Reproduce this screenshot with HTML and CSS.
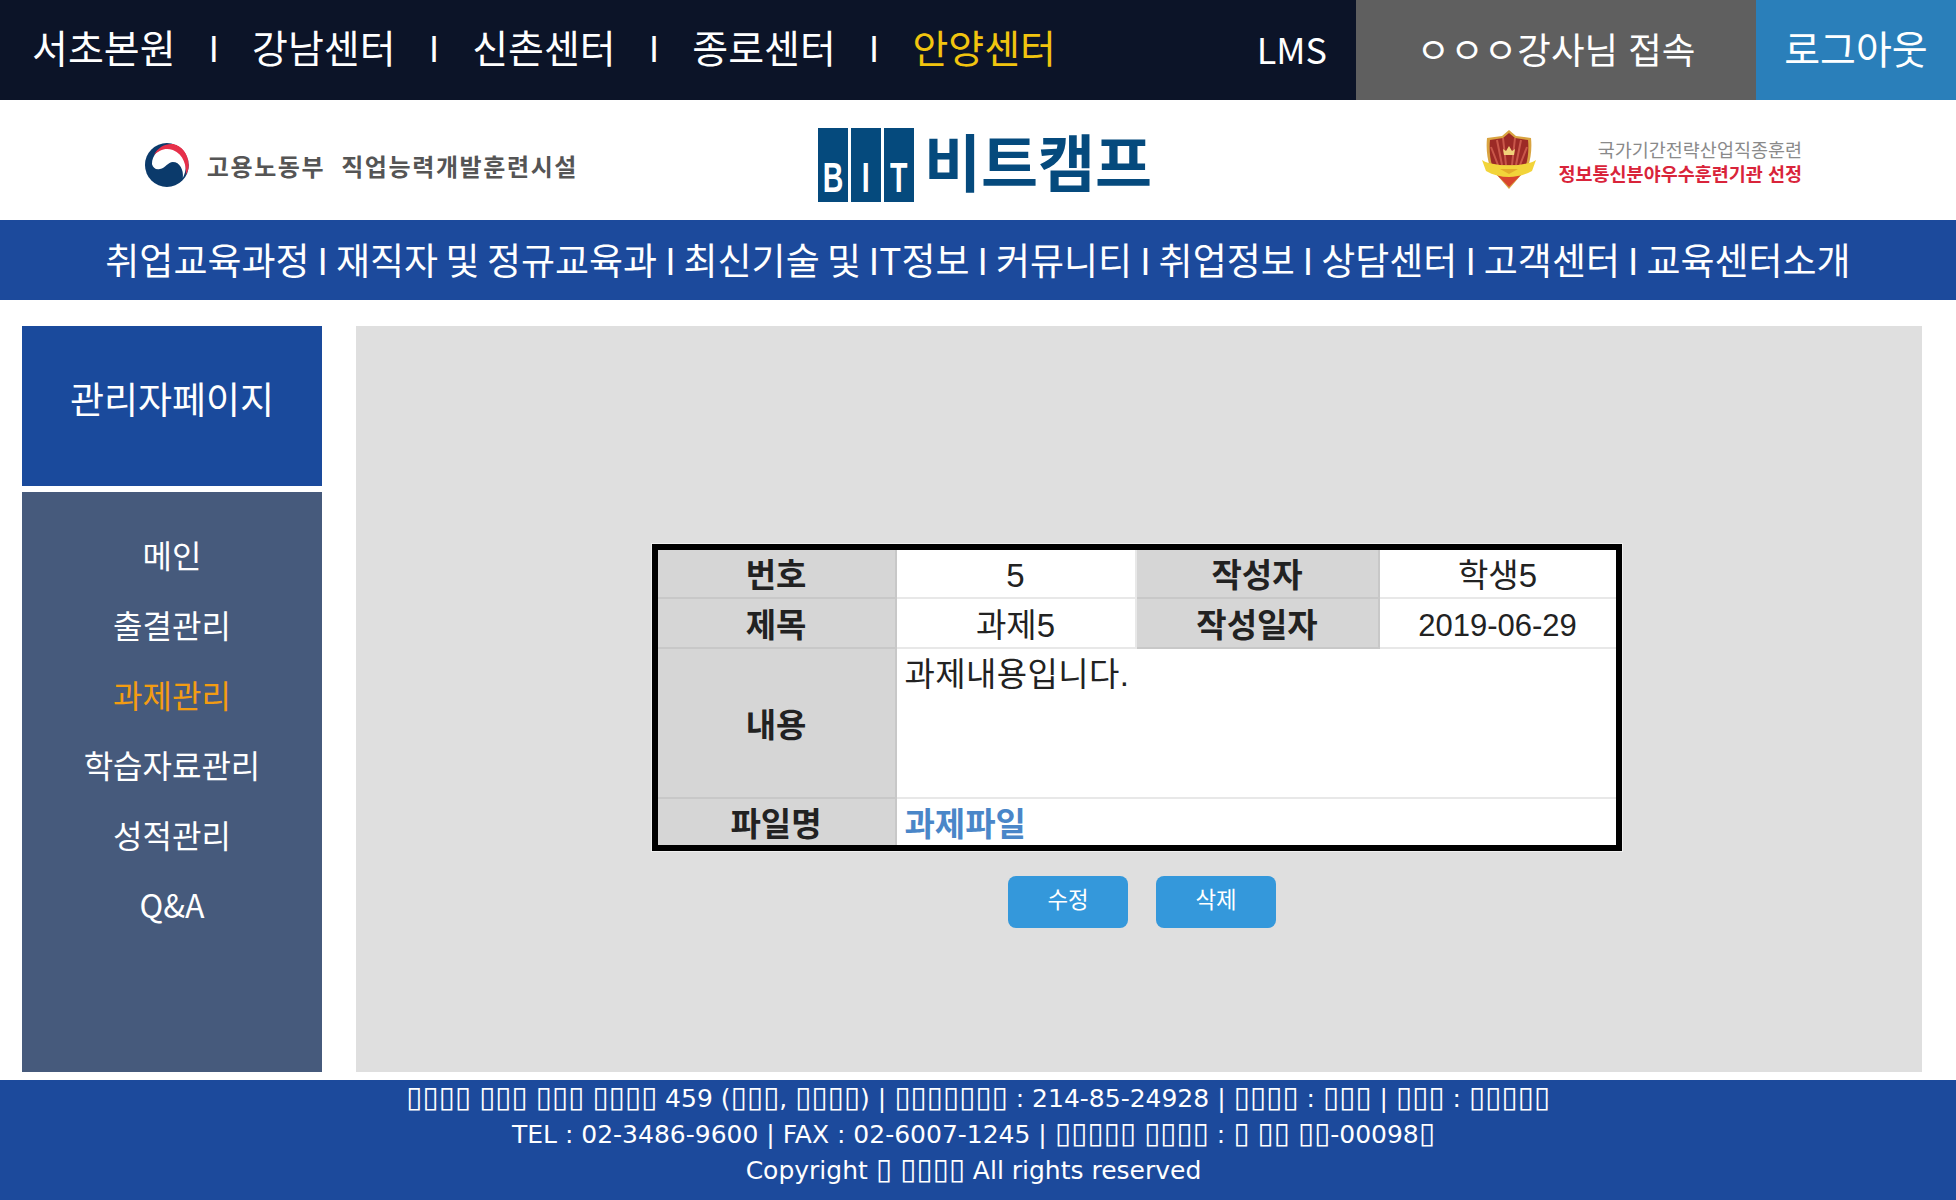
FILE: index.html
```html
<!DOCTYPE html>
<html lang="ko">
<head>
  <meta charset="UTF-8" />
  <title>비트캠프 관리자페이지</title>
  <link rel="stylesheet" href="styles.css">
</head>
<body>

  <div class="topbar">
    <div class="centers">
      <a href="#">서초본원</a><span class="sep">I</span>
      <a href="#">강남센터</a><span class="sep">I</span>
      <a href="#">신촌센터</a><span class="sep">I</span>
      <a href="#">종로센터</a><span class="sep">I</span>
      <a href="#" class="current">안양센터</a>
    </div>
    <a href="#" class="lms">LMS</a>
    <div class="user">ㅇㅇㅇ강사님 접속</div>
    <a href="#" class="logout">로그아웃</a>
  </div>

  <header class="brand">
    <div class="brand-gov">
      <svg class="gov-mark" viewBox="0 0 46 46" width="46" height="46">
        <circle cx="23" cy="23" r="22" fill="#0b3a6b"/>
        <path d="M8 22C8 13 15 6 24 6c10 0 18 8 18 18 0 4-1 8-3 12 1-8-3-16-10-16-5 0-7 6-13 7-4 1-7-1-8-5z" fill="#fff"/>
        <path d="M10 13C14 5 22 1 30 2c8 2 15 10 15 21 0 3-1 7-3 10 1-8-2-21-13-25-7-3-14 0-19 5z" fill="#e6304a"/>
        <path d="M30 2c8 2 15 10 15 21 1-12-6-21-15-21z" fill="#fff"/>
      </svg>
      <span class="gov-name">고용노동부</span>
      <span class="gov-name">직업능력개발훈련시설</span>
    </div>

    <div class="brand-bit">
      <div class="bit-blocks"><span><b>B</b></span><span><b>I</b></span><span><b>T</b></span></div>
      <span class="bit-name">비트캠프</span>
    </div>

    <div class="brand-award">
      <svg class="shield" viewBox="0 0 54 62" width="54" height="62">
        <path d="M27 1l7 6 15 2c1 10 0 20-3 29L27 60 8 38C5 29 4 19 5 9l15-2z" fill="#d9a441"/>
        <path d="M27 4l6 5 13 2c1 9 0 18-2 25H10C8 29 7 20 8 11l13-2z" fill="#9c2a26"/>
        <path d="M15 11l5 25M21 9l3 27M33 9l-3 27M39 11l-5 25M9 18l7 18M45 18l-7 18" stroke="#c9574a" stroke-width="2"/>
        <path d="M21 20l3 2 3-5 3 5 3-2-1 6H22z" fill="#f1d27a"/>
        <path d="M12 43h30L27 58z" fill="#d8452e"/>
        <path d="M0 31c4 3 8 3 12 4 10 2 20 2 30 0 4-1 8-1 12-4l-4 11c-7 4-15 6-23 6s-16-2-23-6z" fill="#f2d43a"/>
        <path d="M18 40h18l-9 5z" fill="#e3ad2a"/>
      </svg>
      <div class="award-text">
        <div class="award-top">국가기간전략산업직종훈련</div>
        <div class="award-bottom">정보통신분야우수훈련기관 선정</div>
      </div>
    </div>
  </header>

  <nav class="mainnav">
    <a href="#">취업교육과정</a><span>I</span>
    <a href="#">재직자 및 정규교육과</a><span>I</span>
    <a href="#">최신기술 및 IT정보</a><span>I</span>
    <a href="#">커뮤니티</a><span>I</span>
    <a href="#">취업정보</a><span>I</span>
    <a href="#">상담센터</a><span>I</span>
    <a href="#">고객센터</a><span>I</span>
    <a href="#">교육센터소개</a>
  </nav>

  <div class="content">
    <aside class="sidebar">
      <h2 class="side-title">관리자페이지</h2>
      <ul class="side-menu">
        <li><a href="#">메인</a></li>
        <li><a href="#">출결관리</a></li>
        <li><a href="#" class="current">과제관리</a></li>
        <li><a href="#">학습자료관리</a></li>
        <li><a href="#">성적관리</a></li>
        <li><a href="#">Q&amp;A</a></li>
      </ul>
    </aside>

    <main class="panel">
      <table class="detail">
        <colgroup>
          <col class="col-1"><col class="col-2"><col class="col-3"><col class="col-4">
        </colgroup>
        <tr class="row-first">
          <th>번호</th>
          <td>5</td>
          <th>작성자</th>
          <td>학생5</td>
        </tr>
        <tr class="row-short">
          <th>제목</th>
          <td>과제5</td>
          <th>작성일자</th>
          <td class="date">2019-06-29</td>
        </tr>
        <tr class="row-tall">
          <th>내용</th>
          <td colspan="3" class="left top">과제내용입니다.</td>
        </tr>
        <tr class="row-short">
          <th>파일명</th>
          <td colspan="3" class="left"><a href="#">과제파일</a></td>
        </tr>
      </table>
      <div class="actions">
        <button type="button">수정</button>
        <button type="button">삭제</button>
      </div>
    </main>
  </div>

  <footer class="footer">
    <p><i>▯▯▯▯</i> <i>▯▯▯</i> <i>▯▯▯</i> <i>▯▯▯▯</i> 459 (<i>▯▯▯</i>, <i>▯▯▯▯</i>) | <i>▯▯▯▯▯▯▯</i> : 214-85-24928 | <i>▯▯▯▯</i> : <i>▯▯▯</i> | <i>▯▯▯</i> : <i>▯▯▯▯▯</i></p>
    <p>TEL : 02-3486-9600 | FAX : 02-6007-1245 | <i>▯▯▯▯▯</i> <i>▯▯▯▯</i> : <i>▯</i> <i>▯▯</i> <i>▯▯</i>-00098<i>▯</i></p>
    <p>Copyright <i>▯</i> <i>▯▯▯▯</i> All rights reserved</p>
  </footer>

</body>
</html>
```

FILE: styles.css
```css
* {
  box-sizing: border-box;
}

body {
  font-family: "Noto Sans CJK KR", "Noto Sans", sans-serif;
  background: white;
  margin: 0;
  padding: 0;
  height: 1200px;
  overflow: hidden;
}

a {
  color: inherit;
  text-decoration: none;
}

/* top bar */
.topbar {
  display: flex;
  height: 100px;
  background: #0c1428;
  color: white;
}

.centers {
  flex: 1;
  display: flex;
  align-items: center;
  gap: 33px;
  padding: 0 0 8px 32px;
  font-size: 39px;
}

.centers .sep {
  font-size: 36px;
}

.centers .current {
  color: #f1c40f;
}

.lms {
  align-self: center;
  margin-right: 29px;
  padding-bottom: 4px;
  font-size: 36px;
}

.user {
  width: 400px;
  background: #5f5f5f;
  display: flex;
  align-items: center;
  justify-content: center;
  padding-bottom: 4px;
  font-size: 36.5px;
}

.logout {
  width: 200px;
  background: #2a7fba;
  display: flex;
  align-items: center;
  justify-content: center;
  padding-bottom: 6px;
  font-size: 39px;
}

/* logo band */
.brand {
  display: flex;
  align-items: center;
  height: 120px;
  padding: 10px 0 0 144px;
}

.brand-gov {
  display: flex;
  align-items: center;
  gap: 16px;
  width: 434px;
}

.gov-mark {
  margin-right: 1px;
}

.gov-name {
  font-size: 24px;
  font-weight: 700;
  letter-spacing: 1.6px;
  color: #555;
  white-space: nowrap;
}

.brand-bit {
  display: flex;
  align-items: flex-start;
  gap: 10px;
  margin-left: 240px;
  width: 332px;
  height: 74px;
}

.bit-blocks {
  display: flex;
  gap: 3px;
  height: 74px;
}

.bit-blocks span {
  width: 30px;
  padding-bottom: 9px;
  background: #054a7d;
  color: white;
  display: flex;
  align-items: flex-end;
  justify-content: center;
  font-family: "Liberation Sans", sans-serif;
  font-size: 42px;
}

.bit-blocks b {
  display: block;
  line-height: 30px;
  transform: scaleX(0.68);
}

.bit-name {
  margin-top: -5px;
  font-size: 62px;
  font-weight: 700;
  line-height: 74px;
  color: #054a7d;
  white-space: nowrap;
}

.brand-award {
  display: flex;
  align-items: center;
  width: 320px;
  margin: 0 0 10px 332px;
}

.award-text {
  flex: 1;
  text-align: right;
  font-size: 18.5px;
  line-height: 24px;
  padding-top: 2px;
  white-space: nowrap;
}

.award-top {
  color: #8a8a8a;
}

.award-bottom {
  color: #d9243a;
  font-weight: 700;
}

/* main nav */
.mainnav {
  display: flex;
  justify-content: center;
  align-items: center;
  gap: 7.8px;
  height: 80px;
  background: #1c4a9c;
  color: white;
  font-size: 37px;
  word-spacing: -3px;
  padding-bottom: 2px;
  white-space: pre;
}

/* sidebar + panel */
.content {
  display: flex;
  gap: 34px;
  padding: 26px 34px 8px 22px;
  height: 780px;
}

.sidebar {
  width: 300px;
  display: flex;
  flex-direction: column;
  gap: 6px;
}

.side-title {
  height: 160px;
  margin: 0;
  padding-top: 44px;
  background: #1a4a9c;
  color: white;
  text-align: center;
  font-size: 37px;
  font-weight: 400;
  line-height: 56px;
}

.side-menu {
  flex: 1;
  list-style: none;
  margin: 0;
  padding: 27px 0 0;
  background: #465a7c;
  color: white;
  text-align: center;
  font-size: 32px;
}

.side-menu li {
  height: 70px;
  line-height: 70px;
}

.side-menu .current {
  color: #f39c12;
}

.panel {
  flex: 1;
  background: #dfdfdf;
  padding-top: 218px;
  display: flex;
  flex-direction: column;
  align-items: center;
}

/* detail table */
.detail {
  width: 970px;
  margin-left: -5px;
  table-layout: fixed;
  border-collapse: collapse;
  border: 6px solid black;
  background: white;
  color: #222;
  font-size: 33px;
  outline: 1px solid #f0f0f0;
}

.col-1 { width: 241px; }
.col-2 { width: 240px; }
.col-3 { width: 243px; }

.row-first { height: 51px; }
.row-short { height: 50px; }
.row-tall { height: 150px; }

.detail th,
.detail td {
  padding: 5px 0 0;
  text-align: center;
  line-height: 40px;
  border: 2px solid #e8e8e8;
  font-family: "Liberation Sans", "Noto Sans CJK KR", sans-serif;
  overflow: hidden;
}

.detail th {
  background: #d6d6d6;
  border-color: #c8c8c8;
  font-weight: 700;
}

.detail td.date {
  font-size: 31px;
}

.detail td.left {
  text-align: left;
  padding-left: 8px;
}

.detail td.top {
  vertical-align: top;
  padding-top: 6px;
  letter-spacing: 0.4px;
}

.detail a {
  color: #4a86c8;
  font-weight: 700;
}

.actions {
  display: flex;
  gap: 28px;
  margin-top: 25px;
  margin-left: 6px;
}

.actions button {
  width: 120px;
  height: 52px;
  padding: 0 0 8px;
  border: none;
  border-radius: 8px;
  background: #3498db;
  color: white;
  font-family: inherit;
  font-size: 22.4px;
  cursor: pointer;
}

/* footer */
.footer {
  height: 120px;
  padding-top: 1px;
  background: #1c4a9c;
  color: white;
  text-align: center;
  font-family: "DejaVu Sans", sans-serif;
  font-size: 25px;
  line-height: 36px;
}

.footer p {
  margin: 0;
}

.footer p + p {
  padding-right: 9px;
}

/* the boxes in the footer text */
.footer i {
  font-style: normal;
  font-size: 29.5px;
  line-height: 0;
}
```
